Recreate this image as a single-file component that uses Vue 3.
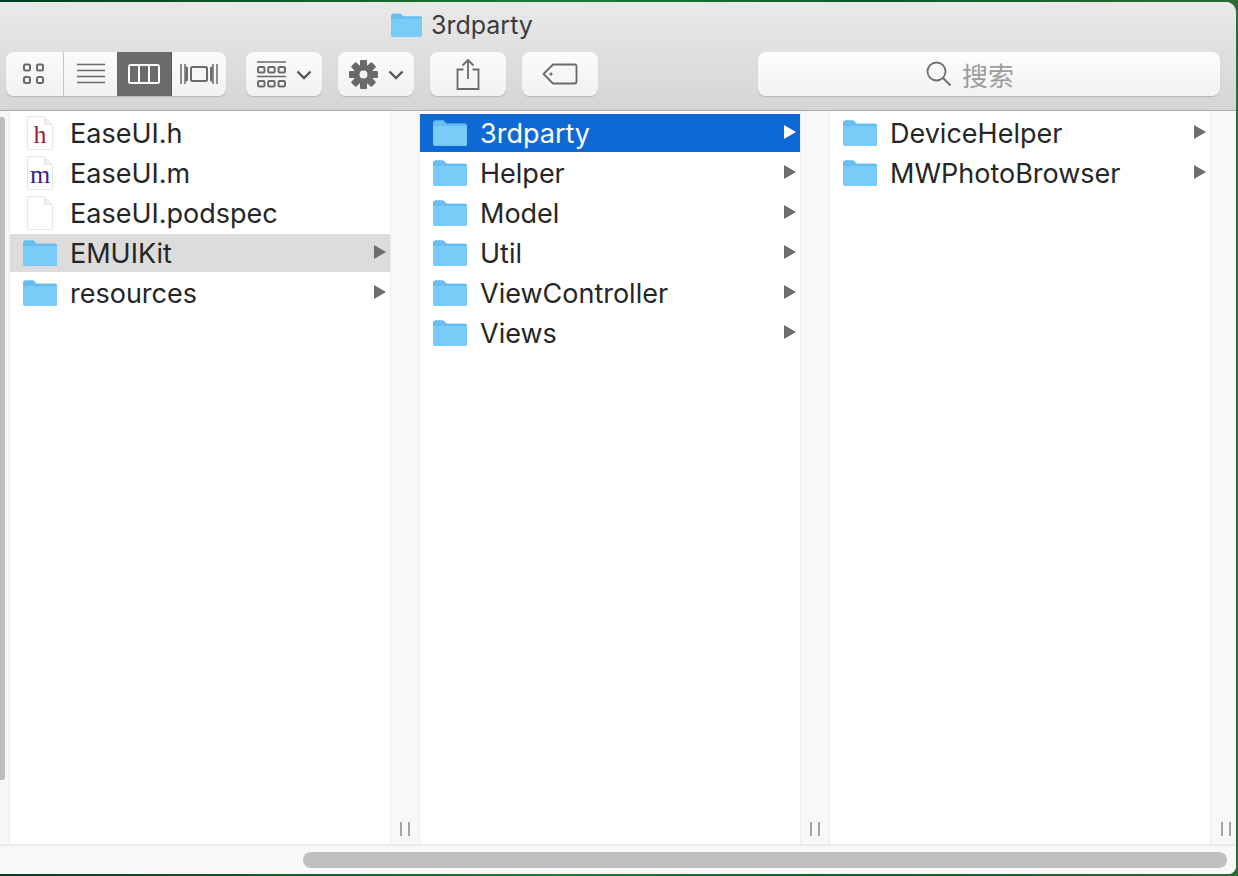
<script setup>
const columns = [
  {
    id: 'root',
    rows: [
      { name: 'EaseUI.h', type: 'file', letter: 'h', tint: '#a5193c' },
      { name: 'EaseUI.m', type: 'file', letter: 'm', tint: '#3c1f8c' },
      { name: 'EaseUI.podspec', type: 'file' },
      { name: 'EMUIKit', type: 'folder', state: 'inactive' },
      { name: 'resources', type: 'folder' },
    ],
  },
  {
    id: 'kit',
    rows: [
      { name: '3rdparty', type: 'folder', state: 'active' },
      { name: 'Helper', type: 'folder' },
      { name: 'Model', type: 'folder' },
      { name: 'Util', type: 'folder' },
      { name: 'ViewController', type: 'folder' },
      { name: 'Views', type: 'folder' },
    ],
  },
  {
    id: 'party',
    rows: [
      { name: 'DeviceHelper', type: 'folder' },
      { name: 'MWPhotoBrowser', type: 'folder' },
    ],
  },
];
</script>

<template>
  <div class="desktop">
    <div class="window">
      <header class="toolbar">
        <div class="title">
          <svg class="title-folder" viewBox="1 1 32 24">
            <path d="M1 3.500C1 2 2 1 3.500 1h6c1.200 0 2 .5 3 1.600L13.500 4H31c1.200 0 2 .8 2 2v17.500c0 1-.8 1.500-1.800 1.500H3c-1.200 0-2-.7-2-1.800z" fill="#68bdf0" />
            <path d="M1 6.500h32v17c0 1-.8 1.500-1.800 1.500H3c-1.200 0-2-.7-2-1.800z" fill="#7accf8" />
          </svg>
          <span>3rdparty</span>
        </div>
        <div class="controls">
          <div class="segments">
            <button class="seg seg-icons" type="button">
              <svg width="24" height="22" viewBox="0 0 24 22" fill="none" stroke="#6a6a6a" stroke-width="2">
                <rect x="2" y="1.500" width="6" height="6" rx="1.500" />
                <rect x="15" y="1.500" width="6" height="6" rx="1.500" />
                <rect x="2" y="14" width="6" height="6" rx="1.500" />
                <rect x="15" y="14" width="6" height="6" rx="1.500" />
              </svg>
            </button>
            <button class="seg seg-list" type="button">
              <svg width="30" height="22" viewBox="0 0 30 22" stroke="#6a6a6a" stroke-width="1.500">
                <path d="M1 1.500h28M1 7.500h28M1 13.500h28M1 19.500h28" />
              </svg>
            </button>
            <button class="seg seg-cols" type="button">
              <svg width="32" height="20" viewBox="0 0 32 20" fill="none" stroke="#fff" stroke-width="2">
                <rect x="1" y="1" width="30" height="18" rx="1.500" />
                <path d="M11 1v18M21 1v18" />
              </svg>
            </button>
            <button class="seg seg-flow" type="button">
              <svg width="38" height="22" viewBox="0 0 38 22" fill="none" stroke="#6a6a6a" stroke-width="1.500">
                <path d="M1 1v20M5 1v20M33 1v20M37 1v20" />
                <path d="M5.500 3l2.500 1.500v13L5.500 19zM32.500 3L30 4.500v13l2.500 1.500z" fill="#6a6a6a" stroke="none" />
                <rect x="11" y="4" width="16" height="14" rx="1.500" stroke-width="2" />
              </svg>
            </button>
          </div>

          <button class="tool tool-arrange" type="button">
            <svg width="29" height="27" viewBox="0 0 29 27" fill="none" stroke="#6a6a6a">
              <path d="M0 1h29M0 15.500h29" stroke-width="1.500" />
              <g stroke-width="2">
                <rect x="1" y="6" width="6.500" height="5.500" rx="1.200" />
                <rect x="11.200" y="6" width="6.500" height="5.500" rx="1.200" />
                <rect x="21.500" y="6" width="6.500" height="5.500" rx="1.200" />
                <rect x="1" y="20" width="6.500" height="5.500" rx="1.200" />
                <rect x="11.200" y="20" width="6.500" height="5.500" rx="1.200" />
                <rect x="21.500" y="20" width="6.500" height="5.500" rx="1.200" />
              </g>
            </svg>
            <svg class="chev" width="16" height="10" viewBox="0 0 16 10" fill="none" stroke="#555" stroke-width="2.400">
              <path d="M1.500 1.500L8 8l6.500-6.500" />
            </svg>
          </button>

          <button class="tool tool-gear" type="button">
            <svg width="29" height="29" viewBox="0 0 29 29">
              <g fill="#6a6a6a">
                <rect x="11" y="0" width="7" height="29" rx="1" />
                <rect x="11" y="0" width="7" height="29" rx="1" transform="rotate(45 14.500 14.500)" />
                <rect x="11" y="0" width="7" height="29" rx="1" transform="rotate(90 14.500 14.500)" />
                <rect x="11" y="0" width="7" height="29" rx="1" transform="rotate(135 14.500 14.500)" />
                <circle cx="14.500" cy="14.500" r="10" />
              </g>
              <circle cx="14.500" cy="14.500" r="4" fill="#f3f3f3" />
            </svg>
            <svg class="chev" width="16" height="10" viewBox="0 0 16 10" fill="none" stroke="#555" stroke-width="2.400">
              <path d="M1.500 1.500L8 8l6.500-6.500" />
            </svg>
          </button>

          <button class="tool" type="button">
            <svg width="24" height="31" viewBox="0 0 24 31" fill="none" stroke="#6a6a6a" stroke-width="1.800">
              <path d="M7.500 10.500H1.500v19.500h21V10.500h-6" />
              <path d="M12 20V1M6.500 6.500L12 1l5.500 5.500" />
            </svg>
          </button>

          <button class="tool" type="button">
            <svg width="36" height="22" viewBox="0 0 36 22" fill="none" stroke="#6a6a6a" stroke-width="1.800" stroke-linejoin="round">
              <path d="M11 1.500h21.500c1.300 0 2 .7 2 2v15c0 1.300-.7 2-2 2H11L1.500 11z" />
              <circle cx="9" cy="11" r="1.500" fill="#6a6a6a" stroke="none" />
            </svg>
          </button>

          <div class="search">
            <svg width="26" height="26" viewBox="0 0 26 26" fill="none" stroke="#6f6f6f" stroke-width="1.800">
              <circle cx="10.500" cy="10.500" r="9" />
              <path d="M17 17l7.500 7.500" stroke-width="2" />
            </svg>
            <span>搜索</span>
          </div>
        </div>
      </header>

      <main class="browser">
        <div class="edge">
          <div class="edge-thumb"></div>
        </div>
        <template v-for="col in columns" :key="col.id">
          <section class="column">
            <div
              v-for="row in col.rows"
              :key="row.name"
              class="row"
              :class="row.state"
            >
              <svg v-if="row.type === 'folder'" class="folder" viewBox="1 1 32 24">
                <path d="M1 3.500C1 2 2 1 3.500 1h6c1.200 0 2 .5 3 1.600L13.500 4H31c1.200 0 2 .8 2 2v17.500c0 1-.8 1.500-1.800 1.500H3c-1.200 0-2-.7-2-1.800z" fill="#68bdf0" />
                <path d="M1 6.500h32v17c0 1-.8 1.500-1.800 1.500H3c-1.200 0-2-.7-2-1.800z" fill="#7accf8" />
              </svg>
              <span v-else class="file">
                <svg viewBox="0 0 26 34" width="26" height="34">
                  <path d="M.5.500h17l8 8v25H.5z" fill="#fff" stroke="#e6e6e6" />
                  <path d="M17.500.500v8h8" fill="#f1f1f1" stroke="#e6e6e6" />
                </svg>
                <b v-if="row.letter" :style="{ color: row.tint }">{{ row.letter }}</b>
              </span>
              <span class="name">{{ row.name }}</span>
              <i v-if="row.type === 'folder'" class="arrow"></i>
            </div>
          </section>
          <div class="splitter">
            <span class="grip"></span>
          </div>
        </template>
      </main>

      <footer class="hscroll">
        <div class="hscroll-thumb"></div>
      </footer>
    </div>
  </div>
</template>

<style scoped>
.desktop {
  width: 1238px;
  height: 876px;
  padding: 2px 2px 2px 0;
  box-sizing: border-box;
  overflow: hidden;
  background: linear-gradient(90deg, #063c22, #1f7a34 45%, #0e5a2c 70%, #2c6b33);
  font-family: Inter, "Liberation Sans", Arial, sans-serif;
}

.window {
  display: flex;
  flex-direction: column;
  height: 100%;
  overflow: hidden;
  border-radius: 0 10px 8px 0;
  background: #f8f8f8;
}

.toolbar {
  flex: none;
  height: 109px;
  box-sizing: border-box;
  padding-top: 7px;
  border-bottom: 1px solid #a9a9a9;
  background: linear-gradient(180deg, #eae9ea, #d6d5d6);
}

.title {
  display: flex;
  align-items: center;
  gap: 9px;
  height: 32px;
  padding-left: 391px;
  color: #3b3b3b;
  font-size: 25px;
}

.title-folder {
  width: 31px;
  height: 24px;
}

.controls {
  display: flex;
  align-items: flex-start;
  gap: 16px;
  margin-top: 11px;
  padding-left: 6px;
}

button {
  padding: 0;
  border: 0;
  font: inherit;
  cursor: default;
}

.segments {
  display: flex;
  height: 44px;
  margin-right: 4px;
  overflow: hidden;
  border-radius: 8px;
  box-shadow: 0 1px 1px #b5b5b5;
}

.seg {
  display: flex;
  justify-content: center;
  align-items: center;
  background: linear-gradient(180deg, #fbfbfb, #f1f1f1);
}

.seg-icons {
  width: 58px;
  border-right: 1px solid #c4c4c4;
  box-sizing: border-box;
  padding-right: 1px;
}

.seg-list {
  width: 53px;
}

.seg-cols {
  width: 55px;
  border-right: 1px solid #555;
  box-sizing: border-box;
  background: #6b6b6b;
}

.seg-flow {
  width: 54px;
}

.tool {
  display: flex;
  justify-content: center;
  align-items: center;
  gap: 10px;
  width: 76px;
  height: 44px;
  border-radius: 8px;
  background: linear-gradient(180deg, #fbfbfb, #f1f1f1);
  box-shadow: 0 1px 1px #b5b5b5;
}

.chev {
  margin-top: 1px;
}

.search {
  display: flex;
  justify-content: center;
  align-items: center;
  gap: 10px;
  width: 462px;
  height: 44px;
  margin-left: 144px;
  padding-right: 38px;
  box-sizing: border-box;
  border-radius: 8px;
  color: #9d9d9d;
  font-family: Inter, "Noto Sans CJK SC", sans-serif;
  font-size: 26px;
  background: linear-gradient(180deg, #fdfdfd, #f2f2f2);
  box-shadow: 0 1px 1px #b5b5b5;
}

.browser {
  flex: 1;
  display: flex;
  min-height: 0;
  border-bottom: 2px solid #ececec;
}

.edge {
  flex: none;
  width: 9px;
  border-right: 1px solid #ececec;
  background: #f7f7f7;
}

.edge-thumb {
  width: 5px;
  height: 663px;
  margin-top: 6px;
  border-radius: 0 3px 3px 0;
  background: #bdbdbd;
}

.column {
  flex: none;
  width: 380px;
  padding-top: 3px;
  box-sizing: border-box;
  background: #fff;
}

.row {
  display: flex;
  align-items: center;
  height: 38px;
  margin-bottom: 2px;
  padding-left: 13px;
  color: #262626;
  font-size: 27px;
}

.row.active {
  color: #fff;
  background: #0f69d4;
}

.row.inactive {
  background: #dcdcdc;
}

.folder {
  flex: none;
  width: 34px;
  height: 26px;
  margin-right: 13px;
}

.file {
  position: relative;
  flex: none;
  display: block;
  width: 26px;
  height: 34px;
  margin: 0 17px 0 4px;
}

.file svg {
  display: block;
}

.file b {
  position: absolute;
  left: 0;
  right: 0;
  top: 6px;
  text-align: center;
  font-family: "Liberation Serif", serif;
  font-size: 26px;
  font-weight: 400;
  line-height: 26px;
}

.name {
  flex: 1;
  margin-top: 2px;
  white-space: nowrap;
  line-height: 38px;
}

.arrow {
  flex: none;
  width: 0;
  height: 0;
  margin: -2px 4px 0 0;
  border-top: 7px solid transparent;
  border-bottom: 7px solid transparent;
  border-left: 12px solid #6e6e6e;
}

.active .arrow {
  border-left-color: #fff;
}

.splitter {
  flex: none;
  display: flex;
  justify-content: center;
  align-items: flex-end;
  width: 30px;
  padding-bottom: 8px;
  box-sizing: border-box;
  border-left: 1px solid #ececec;
  border-right: 1px solid #ececec;
  background: #f8f8f8;
}

.splitter:last-child {
  width: 26px;
  padding-left: 4px;
  border-right: 0;
}

.grip {
  width: 10px;
  height: 14px;
  box-sizing: border-box;
  border-left: 2px solid #a4a4a4;
  border-right: 2px solid #a4a4a4;
}

.hscroll {
  flex: none;
  height: 28px;
  padding: 6px 9px 0 303px;
  box-sizing: border-box;
  background: #f8f8f8;
}

.hscroll-thumb {
  height: 16px;
  border-radius: 8px;
  background: #bfbfbf;
}
</style>
